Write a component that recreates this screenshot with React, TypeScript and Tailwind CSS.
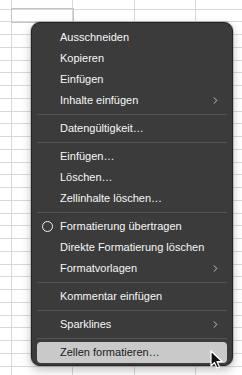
import { ChevronRight } from "lucide-react";

type Item = { label: string; sub?: boolean; circle?: boolean; active?: boolean };

// groups of menu items, separated by a divider
const groups: Item[][] = [
  [
    { label: "Ausschneiden" },
    { label: "Kopieren" },
    { label: "Einfügen" },
    { label: "Inhalte einfügen", sub: true },
  ],
  [{ label: "Datengültigkeit…" }],
  [{ label: "Einfügen…" }, { label: "Löschen…" }, { label: "Zellinhalte löschen…" }],
  [
    { label: "Formatierung übertragen", circle: true },
    { label: "Direkte Formatierung löschen" },
    { label: "Formatvorlagen", sub: true },
  ],
  [{ label: "Kommentar einfügen" }],
  [{ label: "Sparklines", sub: true }],
  [{ label: "Zellen formatieren…", active: true }],
];

const rows = Array.from({ length: 29 });
const cols = Array.from({ length: 4 });

function Sheet() {
  return (
    <div className="flex flex-col">
      {[null, ...rows].map((_, r) => (
        <div key={r} className={r === 0 ? "flex h-[9.5px]" : "flex h-[12.75px]"}>
          <div className="w-[12px] shrink-0 border-r border-b border-[#d9d9d9]" />
          {cols.map((_, c) => (
            <div key={c} className="w-[61.3px] shrink-0 border-r border-b border-[#d9d9d9]" />
          ))}
        </div>
      ))}
    </div>
  );
}

function Row({ item }: { item: Item }) {
  if (item.active) {
    return (
      <div className="mx-[5px] flex h-[21px] items-center rounded-[4px] bg-[#c9c9c9] pl-[23px] text-[#1a1a1a]">
        {item.label}
      </div>
    );
  }
  return (
    <div className="relative flex h-[21px] items-center pl-[28px] pr-[11px] text-[#f7f7f7]">
      {item.circle && (
        <span className="absolute left-[10px] top-[5px] h-[11px] w-[11px] rounded-full border-[1.3px] border-[#f2f2f2]" />
      )}
      <span className="flex-1">{item.label}</span>
      {item.sub && <ChevronRight className="h-[11px] w-[11px] text-[#e6e6e6]" strokeWidth={1.7} />}
    </div>
  );
}

export default function App() {
  return (
    <div className="relative h-[375px] w-[242px] overflow-hidden bg-white font-['Liberation_Sans',Arial,sans-serif]">
      <Sheet />

      {/* selected cell */}
      <div className="absolute left-[11px] top-[8px] h-[15px] w-[63px] border border-[#c4c4c4]" />

      {/* context menu */}
      <div className="absolute left-[31px] top-[22px] w-[202px] rounded-[9px] border border-[#232323] bg-[#3b3b3b] pt-[4px] pb-[2px] text-[11px] shadow-[0_0_0_1px_rgba(150,150,150,0.5),0_4px_10px_rgba(0,0,0,0.25)]">
        {groups.map((g, gi) => (
          <div key={gi}>
            {gi > 0 && <div className="mx-[5px] my-[3px] h-px bg-[#545454]" />}
            {g.map((item) => (
              <Row key={item.label} item={item} />
            ))}
          </div>
        ))}
      </div>

      {/* mouse pointer */}
      <svg className="absolute left-[209px] top-[350px]" width="16" height="20" viewBox="0 0 16 20">
        <path d="M2 1 L2 16 L5.5 12.5 L8 18 L10.5 17 L8 11.5 L13 11.5 Z" fill="#111" stroke="#fff" strokeWidth="1.2" strokeLinejoin="round" />
      </svg>
    </div>
  );
}
